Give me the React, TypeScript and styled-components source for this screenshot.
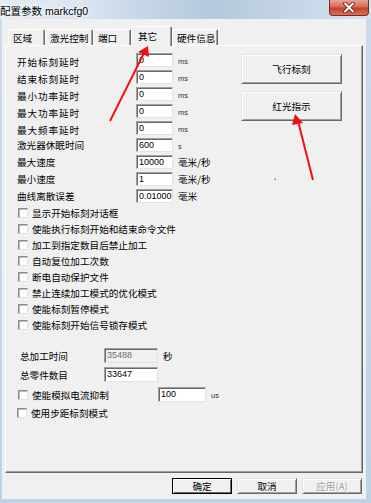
import React from "react";
import styled, { createGlobalStyle } from "styled-components";

const Global = createGlobalStyle`
  html, body { margin: 0; padding: 0; background: #ffffff; }
  body { font-family: "Noto Sans CJK SC", "Liberation Sans", sans-serif; color: #000; }
  * { box-sizing: border-box; }
`;

const CJK = `"Noto Sans CJK SC", "Liberation Sans", sans-serif`;
const LATIN = `"Liberation Sans", "Noto Sans CJK SC", sans-serif`;

const Window = styled.div`
  position: relative;
  width: 371px;
  height: 503px;
  display: flex;
  flex-direction: column;
  background: linear-gradient(180deg, #cbdbec 0%, #c0d2e5 100%);
  overflow: hidden;
`;

const TitleBar = styled.div`
  height: 19px;
  flex: none;
  display: flex;
  align-items: flex-start;
  justify-content: space-between;
  background: linear-gradient(
    90deg,
    #e3ebf4 0%,
    #dbe6f1 22%,
    #c2d3e5 42%,
    #b4c8dd 58%,
    #c5d5e6 78%,
    #d6e2ef 100%
  );
`;

const Title = styled.span`
  padding-top: 5px;
  font-family: ${LATIN};
  font-size: 10.5px;
  line-height: 12px;
  white-space: nowrap;
  text-shadow: 0 0 5px #ffffff, 0 0 3px #ffffff;
`;

const CloseButton = styled.div`
  width: 40px;
  height: 16px;
  margin-right: 2px;
  border: 1px solid #7a2c22;
  border-top: none;
  border-radius: 0 0 4px 4px;
  background: linear-gradient(180deg, #e8a394 0%, #d8654e 48%, #c43f28 52%, #d9705a 100%);
  display: flex;
  align-items: center;
  justify-content: center;
`;

const Body = styled.div`
  flex: 1;
  margin: 0 5px 4px 2px;
  background: #f0f0f0;
  display: flex;
  flex-direction: column;
  padding: 7px 3px 5px 3px;
`;

const TabStrip = styled.div`
  position: relative;
  z-index: 1;
  height: 19px;
  flex: none;
  display: flex;
  align-items: flex-end;
  padding-left: 3px;
`;

const Tab = styled.div<{ $active?: boolean; $w: number }>`
  width: ${(p) => p.$w}px;
  height: ${(p) => (p.$active ? 20 : 16)}px;
  margin-bottom: ${(p) => (p.$active ? -1 : 0)}px;
  padding: ${(p) => (p.$active ? "0 0 2px 6px" : "0 0 0 4px")};
  display: flex;
  align-items: center;
  font-family: ${CJK};
  font-size: 9.6px;
  white-space: nowrap;
  background: #f0f0f0;
  border-top: 1px solid #ffffff;
  border-left: 1px solid #ffffff;
  border-right: 1px solid #696969;
  box-shadow: inset -1px 0 #a0a0a0;
  border-radius: 2px 2px 0 0;
`;

const Panel = styled.div`
  height: 428px;
  flex: none;
  display: flex;
  border-top: 1px solid #ffffff;
  border-left: 1px solid #ffffff;
  border-right: 1px solid #696969;
  border-bottom: 1px solid #696969;
  box-shadow: inset -1px -1px #a0a0a0;
`;

const LeftColumn = styled.div`
  width: 235px;
  flex: none;
  padding: 7px 0 0 11px;
  display: flex;
  flex-direction: column;
`;

const RightColumn = styled.div`
  padding-top: 8px;
  display: flex;
  flex-direction: column;
  gap: 7px;
`;

const ParamGrid = styled.div`
  display: grid;
  grid-template-columns: 119px 37px auto;
  grid-auto-rows: 14px;
  row-gap: 3px;
  align-items: center;
`;

const Label = styled.span<{ $wide?: boolean }>`
  font-family: ${CJK};
  font-size: 9.6px;
  line-height: 14px;
  letter-spacing: ${(p) => (p.$wide ? "0.9px" : "0")};
  white-space: nowrap;
  padding-top: ${(p) => (p.$wide ? "3px" : "0")};
`;

const TextBox = styled.div<{ $disabled?: boolean; $h?: number }>`
  width: 100%;
  height: ${(p) => p.$h ?? 14}px;
  padding-left: 2px;
  background: ${(p) => (p.$disabled ? "#f0f0f0" : "#ffffff")};
  color: ${(p) => (p.$disabled ? "#6d6d6d" : "#000")};
  border-top: 1px solid #a0a0a0;
  border-left: 1px solid #a0a0a0;
  border-right: 1px solid #e3e3e3;
  border-bottom: 1px solid #e3e3e3;
  box-shadow: inset 1px 1px #696969;
  font-family: ${LATIN};
  font-size: 9px;
  line-height: ${(p) => (p.$h ?? 14) - 2}px;
  white-space: nowrap;
  overflow: hidden;
`;

const Unit = styled.span<{ $small?: boolean }>`
  margin-left: 5px;
  font-family: ${(p) => (p.$small ? LATIN : CJK)};
  font-size: ${(p) => (p.$small ? 7.5 : 9.6)}px;
  color: ${(p) => (p.$small ? "#333" : "#000")};
  line-height: 14px;
  white-space: nowrap;
  padding-top: ${(p) => (p.$small ? "3px" : "0")};
`;

const CheckList = styled.div`
  margin-top: 2px;
  padding-left: 1px;
  display: flex;
  flex-direction: column;
`;

const CheckRow = styled.div<{ $gap?: number }>`
  height: 16px;
  margin-top: ${(p) => p.$gap ?? 0}px;
  display: flex;
  align-items: center;
  gap: 4px;
  font-family: ${CJK};
  font-size: 9.6px;
  white-space: nowrap;
`;

const Box = styled.span`
  width: 10px;
  height: 10px;
  flex: none;
  background: #ffffff;
  border: 1px solid;
  border-color: #8e8e8e #e0e0e0 #e0e0e0 #8e8e8e;
  box-shadow: inset 1px 1px #b8b8b8;
`;

const TotalsGrid = styled.div`
  margin-top: 15px;
  padding-left: 3px;
  display: grid;
  grid-template-columns: 84px 54px auto;
  grid-auto-rows: 15px;
  row-gap: 4px;
  align-items: center;
`;

const AnalogRow = styled.div`
  margin-top: 4px;
  padding-left: 1px;
  height: 15px;
  display: grid;
  grid-template-columns: 14px 126px 48px auto;
  align-items: center;
  font-family: ${CJK};
  font-size: 9.6px;
  white-space: nowrap;
`;

const BigButton = styled.div`
  width: 101px;
  height: 30px;
  display: flex;
  align-items: center;
  justify-content: center;
  font-family: ${CJK};
  font-size: 9.6px;
  background: #f0f0f0;
  border-top: 1px solid #e3e3e3;
  border-left: 1px solid #e3e3e3;
  border-right: 1px solid #696969;
  border-bottom: 1px solid #696969;
  box-shadow: inset 1px 1px #ffffff, inset -1px -1px #a0a0a0;
`;

const ButtonRow = styled.div`
  margin-top: 5px;
  flex: none;
  display: flex;
  justify-content: flex-end;
  gap: 5px;
  padding-right: 1px;
`;

const DialogButton = styled.div<{ $primary?: boolean; $disabled?: boolean }>`
  width: 60px;
  height: 16px;
  display: flex;
  align-items: center;
  justify-content: center;
  font-family: ${CJK};
  font-size: 9.6px;
  background: #f0f0f0;
  color: ${(p) => (p.$disabled ? "#a0a0a0" : "#000")};
  text-shadow: ${(p) => (p.$disabled ? "1px 1px #ffffff" : "none")};
  border: 1px solid ${(p) => (p.$primary ? "#000000" : "#696969")};
  border-top-color: ${(p) => (p.$primary ? "#000000" : "#e3e3e3")};
  border-left-color: ${(p) => (p.$primary ? "#000000" : "#e3e3e3")};
  box-shadow: ${(p) =>
    p.$primary
      ? "inset 1px 1px #ffffff, inset -1px -1px #696969"
      : "inset 1px 1px #ffffff, inset -1px -1px #a0a0a0"};
`;

const Overlay = styled.svg`
  position: absolute;
  left: 0;
  top: 0;
  width: 371px;
  height: 503px;
  pointer-events: none;
`;

const params = [
  { label: "开始标刻延时", value: "0", unit: "ms", wide: true },
  { label: "结束标刻延时", value: "0", unit: "ms", wide: true },
  { label: "最小功率延时", value: "0", unit: "ms", wide: true },
  { label: "最大功率延时", value: "0", unit: "ms", wide: true },
  { label: "最大频率延时", value: "0", unit: "ms", wide: true },
  { label: "激光器休眠时间", value: "600", unit: "s" },
  { label: "最大速度", value: "10000", unit: "毫米/秒" },
  { label: "最小速度", value: "1", unit: "毫米/秒" },
  { label: "曲线离散误差", value: "0.01000", unit: "毫米" },
];

const checks = [
  "显示开始标刻对话框",
  "使能执行标刻开始和结束命令文件",
  "加工到指定数目后禁止加工",
  "自动复位加工次数",
  "断电自动保护文件",
  "禁止连续加工模式的优化模式",
  "使能标刻暂停模式",
  "使能标刻开始信号锁存模式",
];

const tabs = [
  { name: "区域", w: 37 },
  { name: "激光控制", w: 48 },
  { name: "端口", w: 38 },
  { name: "其它", w: 41, active: true },
  { name: "硬件信息", w: 46 },
];

export default function App() {
  return (
    <>
      <Global />
      <Window>
        <TitleBar>
          <Title>配置参数 markcfg0</Title>
          <CloseButton>
            <svg width="14" height="11" viewBox="0 0 14 11">
              <path d="M3 1.5 L11 9.5 M11 1.5 L3 9.5" stroke="#5b1a12" strokeWidth="3.6" strokeLinecap="round" />
              <path d="M3 1.5 L11 9.5 M11 1.5 L3 9.5" stroke="#ffffff" strokeWidth="2" strokeLinecap="round" />
            </svg>
          </CloseButton>
        </TitleBar>
        <Body>
          <TabStrip>
            {tabs.map((t) => (
              <Tab key={t.name} $w={t.w} $active={t.active}>
                {t.name}
              </Tab>
            ))}
          </TabStrip>
          <Panel>
            <LeftColumn>
              <ParamGrid>
                {params.map((p) => (
                  <React.Fragment key={p.label}>
                    <Label $wide={p.wide}>{p.label}</Label>
                    <TextBox>{p.value}</TextBox>
                    <Unit $small={p.unit === "ms" || p.unit === "s"}>{p.unit}</Unit>
                  </React.Fragment>
                ))}
              </ParamGrid>
              <CheckList>
                {checks.map((c) => (
                  <CheckRow key={c}>
                    <Box />
                    {c}
                  </CheckRow>
                ))}
              </CheckList>
              <TotalsGrid>
                <Label>总加工时间</Label>
                <TextBox $disabled $h={15}>35488</TextBox>
                <Unit>秒</Unit>
                <Label>总零件数目</Label>
                <TextBox $h={15}>33647</TextBox>
                <span />
              </TotalsGrid>
              <AnalogRow>
                <Box />
                <span>使能模拟电流抑制</span>
                <TextBox $h={15}>100</TextBox>
                <Unit $small>us</Unit>
              </AnalogRow>
              <CheckRow $gap={4}>
                <Box />
                使用步距标刻模式
              </CheckRow>
            </LeftColumn>
            <RightColumn>
              <BigButton>飞行标刻</BigButton>
              <BigButton>红光指示</BigButton>
            </RightColumn>
          </Panel>
          <ButtonRow>
            <DialogButton $primary>确定</DialogButton>
            <DialogButton>取消</DialogButton>
            <DialogButton $disabled>应用(A)</DialogButton>
          </ButtonRow>
        </Body>
        <Overlay viewBox="0 0 371 503">
          <line x1="110" y1="121" x2="144" y2="53" stroke="#ee1111" strokeWidth="2" />
          <polygon points="148,46 149,57 138,52" fill="#ee1111" />
          <line x1="313" y1="180" x2="298" y2="121" stroke="#ee1111" strokeWidth="2" />
          <polygon points="295,114 303,123 292,125" fill="#ee1111" />
          <rect x="274.5" y="178.5" width="1.5" height="1.5" fill="#f05050" />
        </Overlay>
      </Window>
    </>
  );
}
